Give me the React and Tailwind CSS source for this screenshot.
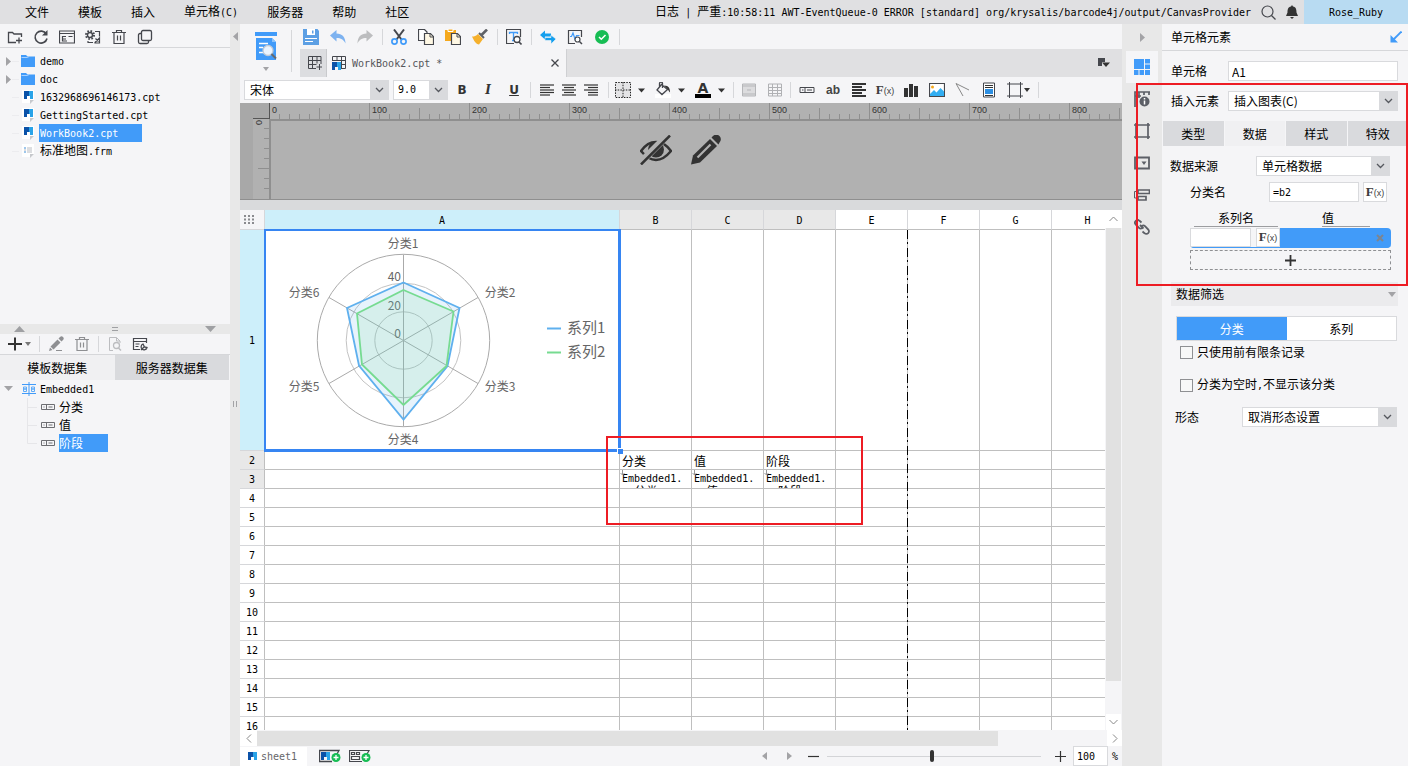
import { useState } from 'react';
import clsx from 'clsx';

const CJK = "font-['Noto_Sans_CJK_SC',sans-serif]";
const MONO = "font-['DejaVu_Sans_Mono','Noto_Sans_CJK_SC',monospace]";

const MENUS = ['文件', '模板', '插入', '单元格(C)', '服务器', '帮助', '社区'];
const LOG = '日志 | 严重:10:58:11 AWT-EventQueue-0 ERROR [standard] org/krysalis/barcode4j/output/CanvasProvider';
const FILES = [
  { name: 'demo', kind: 'folder' },
  { name: 'doc', kind: 'folder' },
  { name: '1632968696146173.cpt', kind: 'cpt' },
  { name: 'GettingStarted.cpt', kind: 'cpt' },
  { name: 'WorkBook2.cpt', kind: 'cpt', selected: true },
  { name: '标准地图.frm', kind: 'frm' },
];
const FIELDS = ['分类', '值', '阶段'];
const COLUMNS = ['A', 'B', 'C', 'D', 'E', 'F', 'G', 'H'];
const ROWS = Array.from({ length: 16 }, (_, i) => i + 1);
const CELLS = {
  B2: '分类', C2: '值', D2: '阶段',
  B3: 'G(分类)', C3: 'G(值)', D3: 'G(阶段)',
};

// latin runs are set in the half-width mono face, the rest stays at 12px
function Txt({ children }) {
  const parts = children.split(/([\x20-\x7e]+)/).filter(Boolean);
  return (
    <span className="whitespace-pre">
      {parts.map((p, i) =>
        /^[\x20-\x7e]/.test(p) ? <span key={i} className={clsx(MONO, 'text-[10px]')}>{p}</span> : p
      )}
    </span>
  );
}

function Icon({ w = 16, h = 16, className, children }) {
  return (
    <svg width={w} height={h} viewBox={`0 0 ${w} ${h}`} fill="none" stroke="#45474d" className={clsx('shrink-0', className)} aria-hidden="true">
      {children}
    </svg>
  );
}

function IconBtn({ label, className = 'w-4', children }) {
  return (
    <button type="button" aria-label={label} className={clsx('flex h-5 shrink-0 items-center justify-center', className)}>
      {children}
    </button>
  );
}

function Sep({ className }) {
  return <div className={clsx('h-4 w-px shrink-0 bg-[#d6d7da]', className)} />;
}

function Caret() {
  return <Icon w={7} h={5}><path d="M0 0.5h7L3.500 4.500z" fill="#333" stroke="none" /></Icon>;
}

function Select({ label, value, id, className, mono }) {
  return (
    <div className={clsx('relative flex h-5 shrink-0 border border-[#d9dadd] bg-white', className)}>
      <select id={id} aria-label={label} className={clsx('h-full w-full appearance-none bg-transparent outline-none', mono ? [MONO, 'pl-1 text-[10px]'] : 'pl-[5px] text-[12px]')}>
        <option>{value}</option>
      </select>
      <span className="pointer-events-none absolute inset-y-0 right-0 flex w-[18px] items-center justify-center bg-[#d9dadd]">
        <Icon w={9} h={6}><path d="M1 1l3.500 3.500L8 1" stroke="#55585e" strokeWidth="1.300" /></Icon>
      </span>
    </div>
  );
}

function Fx() {
  return (
    <span className="flex items-baseline font-['Liberation_Serif',serif] leading-4 font-bold text-[#3c3c3c]">
      <span className="text-[13px]">F</span>
      <span className="font-['Liberation_Sans',sans-serif] text-[9px] font-normal">(x)</span>
    </span>
  );
}

function Logo() {
  return (
    <>
      <path d="M0 0h5v5H3v3H0z" fill="#0b52a8" stroke="none" />
      <path d="M5 0h4v8H6V5H5z" fill="#29a3e8" stroke="none" />
    </>
  );
}

function FileIcon({ kind }) {
  if (kind === 'folder') {
    return <Icon><path d="M1 2h5l1.500 1.500H15V14H1z" fill="#419bf9" stroke="none" /><path d="M1.500 4.500h6L9 3.500" stroke="#a8d1ff" /></Icon>;
  }
  return (
    <Icon>
      <path d="M2 1h12v10l-3 3H2z" fill="#fff" stroke="none" />
      <path d="M10 11h4l-4 4z" fill="#c6c8cc" stroke="none" />
      {kind === 'cpt' ? <g transform="translate(4 2)"><Logo /></g> : (
        <>
          <path d="M4 5h2M4 9h2" stroke="#3f8fd8" />
          <path d="M7 5h5M7 7h5M7 9h5M4 7h2" stroke="#b9bcc2" />
        </>
      )}
    </Icon>
  );
}

function Trash({ color = '#45474d' }) {
  return <Icon><path d="M1 3.500h14M5.500 3V1.500h5V3M3 4v10.500h10V4M6.500 6.500v5M9.500 6.500v5" stroke={color} strokeWidth="1.200" /></Icon>;
}

function LeftPanel() {
  return (
    <aside className="flex w-[230px] shrink-0 flex-col bg-[#f5f5f7]">
      <div className="flex h-6 shrink-0 items-center gap-[10px] border-b border-[#d6d7da] pt-0.5 pl-[7px]">
        <IconBtn label="新建文件夹">
          <Icon><path d="M9 13.500H1.500v-10h4L7 5h7.500v3M12 8.500v6M9 11.500h6" strokeWidth="1.300" /></Icon>
        </IconBtn>
        <IconBtn label="刷新">
          <Icon><path d="M13.300 5A6 6 0 1 0 14 9.500" strokeWidth="1.600" /><path d="M14.500 1v5.500H9z" fill="#45474d" stroke="none" /></Icon>
        </IconBtn>
        <IconBtn label="模板">
          <Icon><path d="M.5 2h15v12H.5zM.5 4.500h15M3.500 7v5.500M3.500 7.500H7M3.500 10H7M3.500 12H8M9.500 7.500h4" strokeWidth="1.200" /></Icon>
        </IconBtn>
        <IconBtn label="设置">
          <Icon><circle cx="5" cy="6" r="4" strokeWidth="2" strokeDasharray="1.600 1.540" /><circle cx="5" cy="6" r="2.500" strokeWidth="1.400" /><path d="M10 2.500h4.500v5M3 12v1.500h5M10 13.500l4.500-4.500v5h-4.500zM10.500 9.500l3 3" strokeWidth="1.200" /></Icon>
        </IconBtn>
        <IconBtn label="删除"><Trash /></IconBtn>
        <IconBtn label="复制">
          <Icon><rect x="4.500" y="1.500" width="10" height="10" rx="1.500" strokeWidth="1.300" /><path d="M4 4.500H3A1.500 1.500 0 0 0 1.500 6v7A1.500 1.500 0 0 0 3 14.500h7a1.500 1.500 0 0 0 1.500-1.500v-1" strokeWidth="1.300" /></Icon>
        </IconBtn>
      </div>

      <ul className="h-[276px] shrink-0 pt-1">
        {FILES.map((f) => (
          <li key={f.name} className="flex h-[18px] items-center pl-1.5">
            <Icon w={14} h={18}>
              {f.kind === 'folder' && <path d="M0 5l5 4.500L0 14z" fill="#a3a3a6" stroke="none" />}
              <path d="M6 9.500h7" stroke="#ececef" />
            </Icon>
            <FileIcon kind={f.kind} />
            <span className={clsx('ml-[3px] flex h-[18px] items-center px-px', f.selected && 'w-[103px] bg-[#419bf9] text-white')}>
              <Txt>{f.name}</Txt>
            </span>
          </li>
        ))}
      </ul>

      <div className="flex h-[10px] shrink-0 items-center justify-between bg-[#e8e8e8] px-[14px]">
        <Icon w={11} h={6}><path d="M5.500 0L11 6H0z" fill="#9fa0a3" stroke="none" /></Icon>
        <Icon w={6} h={4}><path d="M0 .5h6M0 3.500h6" stroke="#9fa0a3" /></Icon>
        <Icon w={11} h={6}><path d="M0 0h11L5.500 6z" fill="#9fa0a3" stroke="none" /></Icon>
      </div>

      <div className="flex h-[21px] shrink-0 items-center border-b border-[#d6d7da] pl-2">
        <IconBtn label="新增" className="w-[22px] gap-[3px]">
          <Icon w={14} h={14}><path d="M7 .5v13M0 7h14" stroke="#333" strokeWidth="2" /></Icon>
          <Icon w={6} h={4}><path d="M0 0h6L3 4z" fill="#777" stroke="none" /></Icon>
        </IconBtn>
        <Sep className="mr-2 ml-[9px]" />
        <IconBtn label="编辑">
          <Icon><path d="M2.500 10.500L9.500 3.500l3 3-7 7zM10.500 2.500L12 1a2 2 0 0 1 3 3l-1.500 1.500zM2 11.500L4.500 14 1 15z" fill="#8e8f92" stroke="none" /><path d="M8 14.500h6" stroke="#8e8f92" /></Icon>
        </IconBtn>
        <span className="w-[10px]" />
        <IconBtn label="删除数据集"><Trash color="#8e8f92" /></IconBtn>
        <Sep className="mx-2" />
        <IconBtn label="预览">
          <Icon><path d="M6 14.500H2.500v-13h7L13 5v2M9.500 1.500V5H13" stroke="#bcbdc0" /><circle cx="9.500" cy="9.500" r="3" stroke="#bcbdc0" strokeWidth="1.300" /><path d="M11.500 12l2.500 2.500" stroke="#bcbdc0" strokeWidth="1.500" /></Icon>
        </IconBtn>
        <span className="w-[9px]" />
        <IconBtn label="连接管理">
          <Icon><path d="M8 13.500H1.500v-11h13V7M1.500 5.500h13M3.500 8h4M3.500 10.500h3" strokeWidth="1.200" /><path d="M9 14l3-3M11 8a3 3 0 1 0 4 3.500l-2.500-.5z" strokeWidth="1.300" /></Icon>
        </IconBtn>
      </div>

      <div className="flex h-[25px] shrink-0 text-[12px]">
        <button type="button" className="flex-1 bg-[#f0f0f2]">模板数据集</button>
        <button type="button" className="mr-px flex-1 bg-[#d9dadd]">服务器数据集</button>
      </div>

      <ul className="flex-1">
        <li className="flex h-[18px] items-center pl-1">
          <Icon w={18} h={6}><path d="M0 0h9L4.500 5z" fill="#a3a3a6" stroke="none" /></Icon>
          <Icon w={14} h={14}>
            <path d="M7 0v14M0 2.500h14M0 11.500h14" stroke="#419bf9" />
            <path d="M1.500 5h3v2h-3zM1.500 7h3v2.500h-3zM9.500 5h3v2h-3zM9.500 7h3v2.500h-3z" stroke="#5fabf8" />
          </Icon>
          <span className="ml-1"><Txt>Embedded1</Txt></span>
        </li>
        {FIELDS.map((f, i) => (
          <li key={f} className="flex h-[18px] items-center pl-[27px]">
            <Icon w={14} h={18}><path d={i === 2 ? 'M.5 0v9.500H10' : 'M.5 0v18M.5 9.500H10'} stroke="#e6e6e9" /></Icon>
            <Icon w={14} h={6}><path d="M.5.5h13v5H.5zM5.500.5v5M7.500 3h4M2.500 3h1" stroke="#6d6e72" /></Icon>
            <span className={clsx('ml-1 flex h-[18px] items-center', i === 2 && 'w-[49px] bg-[#419bf9] text-white')}>{f}</span>
          </li>
        ))}
      </ul>
    </aside>
  );
}

function MainToolbar() {
  return (
    <div className="flex h-[25px] items-center pl-[3px]">
      <div className="flex gap-[11px]">
        <IconBtn label="保存">
          <Icon>
            <path d="M0 0h14.500L16 2v14H0z" fill="#5c9fe4" stroke="none" />
            <path d="M4 0h8v6H4z" fill="#fff" stroke="none" /><path d="M9 1.500h1.500v3H9z" fill="#5c9fe4" stroke="none" />
            <path d="M2 9.500h12M2 12.500h8" stroke="#fff" />
          </Icon>
        </IconBtn>
        <IconBtn label="撤销"><Icon><path d="M6.500 1v3.500C12 4.500 15.500 8 15.500 14.500 13.500 10.500 11 9 6.500 9v3.500L0 6.500z" fill="#7db2f0" stroke="none" /></Icon></IconBtn>
        <IconBtn label="重做"><Icon><path d="M9.500 1v3.500C4 4.500.5 8 .5 14.500 2.500 10.500 5 9 9.500 9v3.500L16 6.500z" fill="#bcbdbf" stroke="none" /></Icon></IconBtn>
      </div>
      <Sep className="mr-2 ml-[9px]" />
      <div className="flex gap-[11px]">
        <IconBtn label="剪切">
          <Icon>
            <path d="M3 .5l7.500 10M13 .5L5.500 10.500" strokeWidth="2" />
            <circle cx="3.500" cy="12.500" r="2.600" stroke="#419bf9" strokeWidth="1.700" /><circle cx="12.500" cy="12.500" r="2.600" stroke="#419bf9" strokeWidth="1.700" />
          </Icon>
        </IconBtn>
        <IconBtn label="复制单元格">
          <Icon><path d="M.5 .5h6L9 3v8.500H.5z" fill="#fff" strokeWidth="1.200" /><path d="M6.500 4.500h6l3 3v8h-9z" fill="#fff8e4" strokeWidth="1.200" /><path d="M12 4.500V8h3.500" /></Icon>
        </IconBtn>
        <IconBtn label="粘贴">
          <Icon><path d="M0 1h11v11H0z" fill="#f5a81c" stroke="none" /><path d="M3 0h5v2.500H3z" fill="#f5a81c" stroke="#fff" /><path d="M6.500 4.500h6l3 3v8h-9z" fill="#fff8e4" strokeWidth="1.200" /><path d="M12 4.500V8h3.500" /></Icon>
        </IconBtn>
        <IconBtn label="格式刷">
          <Icon><path d="M15 .5L9.500 6" strokeWidth="2.600" stroke="#5f6166" /><path d="M7 4l5 5" stroke="#5f6166" strokeWidth="2" /><path d="M6 5l5 5-4 5.500C4 15 2 12 0 7.500 2.500 7.500 4 7 6 5z" fill="#f5b02c" stroke="none" /></Icon>
        </IconBtn>
      </div>
      <Sep className="mr-2 ml-[9px]" />
      <IconBtn label="查找">
        <Icon><path d="M8 14.500H.5V.5h14V8" strokeWidth="1.200" /><path d="M3.500 5V3.500h8V5M7.500 3.500v8M6 11.500h2" stroke="#419bf9" strokeWidth="1.300" /><circle cx="11" cy="10.500" r="3" fill="#fff" strokeWidth="1.300" /><path d="M13 13l2.500 2.500" strokeWidth="1.600" /></Icon>
      </IconBtn>
      <Sep className="mr-2 ml-[9px]" />
      <div className="flex gap-[11px]">
        <IconBtn label="切换">
          <Icon><path d="M5 1.500v3h6v3H5v3L0 6z" fill="#149fee" stroke="none" /><path d="M11 6v2.500H5v3h6V15l5-5z" fill="#149fee" stroke="#f5f5f7" strokeWidth=".6" /></Icon>
        </IconBtn>
        <IconBtn label="监控">
          <Icon><path d="M8 14.500H1.500v-13h13V8" strokeWidth="1.200" /><path d="M3 7.500h1.500L6 4l2 6 1.500-3.500h3" stroke="#419bf9" strokeWidth="1.200" /><circle cx="10.500" cy="10.500" r="2.500" fill="#fff" strokeWidth="1.200" /><path d="M12.500 12.500L15 15" strokeWidth="1.500" /></Icon>
        </IconBtn>
        <IconBtn label="检查">
          <Icon><circle cx="8" cy="8" r="7" fill="#17bd54" stroke="none" /><path d="M5 8l2.300 2.300L11.500 6" stroke="#fff" strokeWidth="1.500" /></Icon>
        </IconBtn>
      </div>
      <Sep className="ml-[9px]" />
    </div>
  );
}

function FileTabs() {
  return (
    <div className="flex h-7 items-stretch bg-[#e0e0e2]">
      <button type="button" aria-label="新建" className="flex w-[27px] items-center justify-center border-r border-[#c9cacd] bg-[#dcdde0] pl-1">
        <Icon w={14} h={14}><path d="M8 12.500H.5V.5h12.500V8M.5 4.500H13M.5 8.500h8M4.500.5v12M9 .5v7M11.500 8v6M8.500 11h6" /></Icon>
      </button>
      <div className="flex w-[240px] items-center border-r border-[#cfd0d3] bg-[#f5f5f7] pl-[5px]">
        <Icon w={14} h={14}>
          <path d="M.5 5V.5h13v12H9M.5 4.500h13M9 8.500h4.500M5 .5v4M9.500.5V13" />
          <g transform="translate(0 6)"><Logo /></g>
        </Icon>
        <span className="ml-1.5 flex-1 text-[#55565a]"><Txt>WorkBook2.cpt *</Txt></span>
        <button type="button" aria-label="关闭" className="mr-[7px]">
          <Icon w={8} h={8}><path d="M.5.5l7 7M7.500.5l-7 7" strokeWidth="1.300" /></Icon>
        </button>
      </div>
      <button type="button" aria-label="标签列表" className="mr-3 ml-auto">
        <Icon w={12} h={10}><path d="M0 0h7v4H4v4H0z" fill="#45474d" stroke="none" /><path d="M4 4.500h8L8 9z" fill="#333" stroke="none" /></Icon>
      </button>
    </div>
  );
}

function AlignIcon({ lines }) {
  return <Icon w={14} h={13}>{lines.map(([a, b], i) => <path key={i} d={`M${a} ${i * 2.5 + 1}H${b}`} stroke="#333" strokeWidth="1.200" />)}</Icon>;
}

function FormatBar() {
  return (
    <div className="flex h-[26px] shrink-0 items-center pl-1">
      <Select label="字体" value="宋体" className="w-[145px]" />
      <Select label="字号" value="9.0" mono className="ml-1 w-[55px]" />
      <div className="ml-[6px] flex gap-[10px] text-[12px] text-[#333]">
        <IconBtn label="加粗"><b className="font-['DejaVu_Sans',sans-serif]">B</b></IconBtn>
        <IconBtn label="斜体"><i className="font-['DejaVu_Serif',serif] font-bold">I</i></IconBtn>
        <IconBtn label="下划线"><u className="font-['DejaVu_Sans',sans-serif] font-bold">U</u></IconBtn>
      </div>
      <Sep className="mr-[9px] ml-2" />
      <div className="flex gap-2">
        <IconBtn label="左对齐" className="w-[14px]"><AlignIcon lines={[[0, 14], [0, 10], [0, 14], [0, 14], [0, 10]]} /></IconBtn>
        <IconBtn label="居中" className="w-[14px]"><AlignIcon lines={[[0, 14], [2, 12], [0, 14], [2, 12], [0, 14]]} /></IconBtn>
        <IconBtn label="右对齐" className="w-[14px]"><AlignIcon lines={[[0, 14], [4, 14], [0, 14], [4, 14], [4, 14]]} /></IconBtn>
      </div>
      <Sep className="mr-[6px] ml-[10px]" />
      <div className="flex gap-[10px]">
        <IconBtn label="边框" className="w-[30px] gap-[7px]">
          <Icon><path d="M.5.5h15v15H.5zM8 0v16M0 8h16" stroke="#222" strokeDasharray="1.500 1.200" fill="#e4e4e6" /></Icon><Caret />
        </IconBtn>
        <IconBtn label="背景色" className="w-[30px] gap-[7px]">
          <Icon><path d="M0 12h16v4H0z" fill="#fff" stroke="none" /><path d="M6.500 2.500l6 5L7 12.500 2 8zM4.500 5V1.500a1.500 1.500 0 0 1 3 0V6" strokeWidth="1.300" /><path d="M9 3.500c5 0 6 3 6 7-1.500-1-1.500-3-3-4z" fill="#333" stroke="none" /></Icon><Caret />
        </IconBtn>
        <IconBtn label="文字颜色" className="w-[30px] gap-[7px]">
          <span className="flex w-4 flex-col items-center"><b className="font-['DejaVu_Sans',sans-serif] text-[14px] leading-3 text-[#333]">A</b><span className="h-1 w-4 bg-black" /></span>
          <Caret />
        </IconBtn>
      </div>
      <Sep className="mr-[7px] ml-2" />
      <div className="flex gap-[10px]">
        <IconBtn label="合并">
          <Icon><path d="M1.500 2h13v12h-13z" fill="#dcdcde" stroke="#b5b6b9" /><path d="M1.500 4h13M1.500 12h13M6 8h4" stroke="#b5b6b9" /></Icon>
        </IconBtn>
        <IconBtn label="拆分">
          <Icon><path d="M1.500 2h13v12h-13zM1.500 5.500h13M1.500 8.500h13M1.500 11.500h13M5.500 2v12M10.500 2v12" stroke="#b0b1b4" /></Icon>
        </IconBtn>
      </div>
      <Sep className="mr-2 ml-[7px]" />
      <div className="flex gap-[10px]">
        <IconBtn label="数据列"><Icon><path d="M1 5.500h14v5H1zM6 5.500v5M8 8h5M3 8h1.500" /></Icon></IconBtn>
        <IconBtn label="文本"><span className="font-['Liberation_Sans',sans-serif] text-[12px] font-bold text-[#444]">ab</span></IconBtn>
        <IconBtn label="富文本"><Icon><path d="M1 2h14M1 5h10M1 8h14M1 11h10M1 14h14" stroke="#333" strokeWidth="1.800" /></Icon></IconBtn>
        <IconBtn label="公式"><Fx /></IconBtn>
        <IconBtn label="图表"><Icon><path d="M1 6h4v9H1zM6 2h4v13H6zM11 4h4v11h-4z" fill="#333" stroke="none" /></Icon></IconBtn>
        <IconBtn label="图片">
          <Icon><path d="M.5 1.500h15v13H.5z" fill="#fff" strokeWidth="1.200" /><circle cx="3.500" cy="5" r="1.500" fill="#f5a81c" stroke="none" /><path d="M1 14v-2l4-4 2.500 2.500L11.500 6 15 9.500V14z" fill="#32aef2" stroke="none" /></Icon>
        </IconBtn>
        <IconBtn label="斜线"><Icon><path d="M1 1.500l13 6.500M1 1.500l7 12.500" stroke="#888" /></Icon></IconBtn>
        <IconBtn label="子报表"><Icon><path d="M2.500 1h11v14h-11z" fill="#fff" /><path d="M4 3.500h8M4 5.500h8M4 13.500h8" stroke="#333" /><path d="M4 7h8v5H4z" fill="#2d8fe2" stroke="none" /></Icon></IconBtn>
        <IconBtn label="悬浮元素" className="w-[23px] gap-px">
          <Icon><path d="M2.500 0v16M13.500 0v16M0 2h16M0 14h16" /></Icon>
          <Icon w={6} h={4}><path d="M0 0h6L3 4z" fill="#333" stroke="none" /></Icon>
        </IconBtn>
      </div>
      <Sep className="ml-2" />
    </div>
  );
}

function ReportHeader() {
  const ticks = Array.from({ length: 86 }, (_, i) => i);
  return (
    <div className="relative h-[97px] shrink-0 overflow-hidden border-b border-[#8f8f8f] bg-[#b1b1b1]">
      <svg className="block h-full w-full" fill="none" stroke="#8f8f8f">
        <path d="M0 0h13v97H0zM0 0h30v16H0z" fill="#a8a8a8" stroke="none" />
        {ticks.map((i) => (
          <path key={i} d={`M${i * 10 + 29.5} ${i % 10 === 0 ? 0 : i % 5 === 0 ? 5 : 11}V16`} />
        ))}
        {[1, 2, 3, 4, 5, 6, 7].map((i) => (
          <path key={i} d={`M${i === 5 ? 18 : 24} ${i * 10 + 15.5}H29`} />
        ))}
        <path d="M30 17H900M30 16v81" strokeWidth="2" />
        <path d="M13 15.500h17M29.500 0v16" stroke="#555" />
        {[0, 1, 2, 3, 4, 5, 6, 7, 8].map((i) => (
          <text key={i} x={i * 100 + 32} y="10" fontSize="9" fontFamily="Liberation Sans, sans-serif" fill="#333" stroke="none">{i * 100}</text>
        ))}
        <text transform="translate(22 22) rotate(-90)" fontSize="9" fontFamily="Liberation Sans, sans-serif" fill="#333" stroke="none">0</text>
      </svg>
      <div className="absolute inset-x-0 top-8 flex justify-center gap-[18px]">
        <button type="button" aria-label="隐藏">
          <Icon w={32} h={30}>
            <path d="M1 16C6 9 11 7 16 7s10 2 15 9c-5 6-10 9-15 9S6 22 1 16z" strokeWidth="2.500" stroke="#333" />
            <circle cx="16" cy="14.500" r="8" fill="#333" stroke="none" />
            <path d="M0 28L29 -1" stroke="#b1b1b1" strokeWidth="7" />
            <path d="M1 29.500L30 .5" stroke="#333" strokeWidth="2.500" />
          </Icon>
        </button>
        <button type="button" aria-label="编辑页眉">
          <Icon w={32} h={30}>
            <path d="M1 29.500l2-9L20 4l7 7L10 27.500z" fill="#333" stroke="none" />
            <path d="M21.500 2.500l1.500-1.500a4 4 0 0 1 6.500 6.500L28.500 9.500z" fill="#333" stroke="none" />
            <path d="M7.500 22.500L20.500 9.500" stroke="#b1b1b1" strokeWidth="2.200" />
          </Icon>
        </button>
      </div>
    </div>
  );
}

function RadarChart() {
  const font = 'Noto Sans CJK SC, sans-serif';
  const spokes = [[0, -86], [74.5, -43], [74.5, 43], [0, 86], [-74.5, 43], [-74.5, -43]];
  const labels = [[138, 18, '分类1'], [235, 67, '分类2'], [235, 161, '分类3'], [138, 214, '分类4'], [39, 161, '分类5'], [39, 67, '分类6']];
  return (
    <svg width="354" height="220" viewBox="0 0 354 220" fill="none" className="block">
      {[28.7, 57.3, 86.2].map((r) => <circle key={r} cx="138.500" cy="110.500" r={r} stroke={r > 80 ? '#aaa' : '#c3c3c3'} />)}
      {spokes.map(([x, y], i) => <path key={i} d={`M138.500 110.500l${x} ${y}`} stroke="#aaa" />)}
      <g fontFamily={font} fontSize="12" fill="#666">
        <text x="136" y="51" textAnchor="end">40</text>
        <text x="136" y="80" textAnchor="end">20</text>
        <text x="136" y="108" textAnchor="end">0</text>
      </g>
      <path d="M138.500 52.500L194.500 78 182.500 136 138.500 189.500 94 135.500 82 78z" fill="#5fb0ee" fillOpacity=".15" stroke="#5fb0ee" strokeWidth="1.800" />
      <path d="M138.500 60L188.500 81.500 181.500 136 138.500 175 97 134.500 92 83.500z" fill="#76db91" fillOpacity=".15" stroke="#76db91" strokeWidth="1.800" />
      <g fontFamily={font} fontSize="12" fill="#666">
        {labels.map(([x, y, t]) => <text key={t} x={x} y={y} textAnchor="middle">{t}</text>)}
      </g>
      <path d="M282 98.500h14" stroke="#5fb0ee" strokeWidth="2" />
      <path d="M282 122.500h14" stroke="#76db91" strokeWidth="2" />
      <g fontFamily={font} fontSize="15" fill="#666">
        <text x="302" y="103">系列1</text>
        <text x="302" y="127">系列2</text>
      </g>
    </svg>
  );
}

function Cell({ id }) {
  if (id === 'A1') {
    return (
      <div className="relative">
        <RadarChart />
        <div className="absolute -inset-px -right-0.5 -bottom-0.5 border-2 border-r-[3px] border-b-[3px] border-[#3685f2]" />
        <div className="absolute -right-1 -bottom-1 h-1.5 w-1.5 border-t border-l border-white bg-[#3685f2]" />
      </div>
    );
  }
  const value = CELLS[id];
  if (!value) return null;
  if (id.endsWith('3')) {
    return (
      <div className="relative h-[18px] overflow-hidden pl-0.5 leading-[14px]">
        <Icon w={5} h={6} className="absolute top-0 left-0"><path d="M2.500 0v5M.5 3l2 2 2-2" stroke="#999" /></Icon>
        <div className="h-[14px]"><Txt>Embedded1.</Txt></div>
        <div><Txt>{value}</Txt></div>
      </div>
    );
  }
  return <div className="h-[18px] pl-0.5 leading-[20px]">{value}</div>;
}

function Sheet() {
  return (
    <div className="flex min-h-0 flex-1">
      <div className="relative min-w-0 flex-1 overflow-hidden bg-white">
        <table className="w-[884px] table-fixed border-separate border-spacing-0 text-left leading-[14px]">
          <colgroup>
            <col className="w-[25px]" />
            <col className="w-[355px]" />
            {COLUMNS.slice(1).map((c) => <col key={c} className="w-[72px]" />)}
          </colgroup>
          <thead>
            <tr className="h-5">
              <th aria-label="全选" className="border-r border-b border-[#d6d7da] bg-[#f5f5f7] p-0">
                <Icon w={12} h={9} className="ml-1"><path d="M0 1h12M0 4.500h12M0 8h12" stroke="#8a8b8f" strokeWidth="2" strokeDasharray="2" /></Icon>
              </th>
              {COLUMNS.map((c, i) => (
                <th key={c} className={clsx('border-r border-b border-r-[#d6d7da] border-b-[#bfbfbf] p-0 text-center font-normal', i === 0 ? 'bg-[#cdeffa]' : i < 4 ? 'bg-[#e8e8e8]' : 'bg-white')}>
                  <Txt>{c}</Txt>
                </th>
              ))}
            </tr>
          </thead>
          <tbody>
            {ROWS.map((r) => (
              <tr key={r} className={r === 1 ? 'h-[221px]' : 'h-[19px]'}>
                <th className={clsx('border-r border-b border-r-[#bfbfbf] border-b-[#d6d7da] p-0 text-center font-normal', r === 1 ? 'bg-[#cdeffa]' : r < 4 ? 'bg-[#e8e8e8]' : 'bg-white')}>
                  <Txt>{String(r)}</Txt>
                </th>
                {COLUMNS.map((c) => (
                  <td key={c} className="border-r border-b border-[#bfbfbf] p-0">
                    <Cell id={c + r} />
                  </td>
                ))}
              </tr>
            ))}
          </tbody>
        </table>
        {/* page break */}
        <div className="absolute top-5 bottom-0 left-[667px] w-px bg-[repeating-linear-gradient(to_bottom,#000_0_9px,#bfbfbf_9px_12px,#000_12px_14px,#bfbfbf_14px_18px)]" />
        <div className="absolute top-[226px] left-[366px] h-[89px] w-[257px] border-2 border-[#ed1c24]" />
      </div>
      <div className="flex w-[17px] shrink-0 flex-col items-center bg-[#f5f5f7]">
        <button type="button" aria-label="向上" className="flex h-[18px] w-full items-center justify-center bg-white">
          <Icon w={9} h={6}><path d="M.5 5L4.500 1l4 4" stroke="#888" /></Icon>
        </button>
        <div className="h-[453px] w-[15px] bg-[#e1e1e1]" />
        <button type="button" aria-label="向下" className="mt-auto flex h-4 w-[15px] items-center justify-center bg-white">
          <Icon w={9} h={6}><path d="M.5 1l4 4 4-4" stroke="#888" /></Icon>
        </button>
      </div>
    </div>
  );
}

function SheetFooter() {
  const [zoom, setZoom] = useState(100);
  return (
    <>
      <div className="flex h-4 shrink-0 items-center bg-[#f5f5f7]">
        <button type="button" aria-label="向左" className="flex h-4 w-[17px] items-center justify-center bg-white">
          <Icon w={6} h={9}><path d="M5 .5l-4 4 4 4" stroke="#888" /></Icon>
        </button>
        <div className="h-[15px] w-[741px] bg-[#e1e1e1]" />
        <button type="button" aria-label="向右" className="ml-auto flex h-4 w-[15px] items-center justify-center bg-white">
          <Icon w={6} h={9}><path d="M1 .5l4 4-4 4" stroke="#888" /></Icon>
        </button>
      </div>
      <div className="flex h-5 shrink-0 items-center bg-[#f5f5f7]">
        <button type="button" className="flex h-[19px] w-[67px] items-center gap-1 bg-white pl-2 text-[#66676b]">
          <Icon w={9} h={8}><Logo /></Icon>
          <Txt>sheet1</Txt>
        </button>
        <IconBtn label="新增sheet" className="ml-3 w-[22px]">
          <Icon w={22} h={14}><path d="M13 12.500H.5V1.500H20L18 5" strokeWidth="1.300" /><g transform="translate(2 3)"><Logo /></g><circle cx="17" cy="8.500" r="4.500" fill="#17bd54" stroke="none" /><path d="M14.500 8.500h5M17 6v5" stroke="#fff" strokeWidth="1.300" /></Icon>
        </IconBtn>
        <IconBtn label="新增聚合块" className="ml-2 w-[22px]">
          <Icon w={22} h={14}><path d="M13 12.500H.5V1.500H20L18 5M2.500 3.500h3v2h-3zM7.500 3.500h3v2h-3zM2.500 7.500h8v3h-8z" strokeWidth="1.200" /><circle cx="17" cy="8.500" r="4.500" fill="#17bd54" stroke="none" /><path d="M14.500 8.500h5M17 6v5" stroke="#fff" strokeWidth="1.300" /></Icon>
        </IconBtn>
        <div className="ml-auto flex items-center">
          <button type="button" aria-label="上一页"><Icon w={5} h={8}><path d="M5 0v8L0 4z" fill="#a3a3a6" stroke="none" /></Icon></button>
          <button type="button" aria-label="下一页" className="ml-5"><Icon w={5} h={8}><path d="M0 0v8l5-4z" fill="#a3a3a6" stroke="none" /></Icon></button>
          <button type="button" aria-label="缩小" className="ml-4"><Icon w={11} h={11}><path d="M0 5.500h11" stroke="#333" strokeWidth="1.200" /></Icon></button>
          <input
            type="range"
            aria-label="缩放"
            min="10"
            max="194"
            value={zoom}
            onChange={(e) => setZoom(Number(e.target.value))}
            className="mx-2 h-3 w-[214px] appearance-none bg-[linear-gradient(#d3d4d7,#d3d4d7)] bg-[length:100%_1px] bg-center bg-no-repeat [&::-webkit-slider-thumb]:h-3 [&::-webkit-slider-thumb]:w-1 [&::-webkit-slider-thumb]:appearance-none [&::-webkit-slider-thumb]:rounded-sm [&::-webkit-slider-thumb]:bg-[#333]"
          />
          <button type="button" aria-label="放大" className="ml-1.5"><Icon w={11} h={11}><path d="M0 5.500h11M5.500 0v11" stroke="#333" strokeWidth="1.200" /></Icon></button>
          <input aria-label="缩放比例" value={zoom} readOnly className={clsx(MONO, 'ml-[7px] h-5 w-[35px] border border-[#d9dadd] bg-white pl-[3px] text-[10px]')} />
          <span className="mr-1 ml-1"><Txt>%</Txt></span>
        </div>
      </div>
    </>
  );
}

function SideBar() {
  const dark = '#5c5f66';
  return (
    <nav className="flex w-10 shrink-0 flex-col items-center bg-[#e8e8e8]">
      <button type="button" aria-label="收起" className="flex h-[27px] items-center">
        <Icon w={5} h={9}><path d="M0 0v9l5-4.500z" fill="#a3a3a6" stroke="none" /></Icon>
      </button>
      <button type="button" aria-label="单元格元素" className="flex h-8 w-8 items-center justify-center bg-[#f5f5f7]">
        <Icon><path d="M0 0h10v10H0zM11 0h5v4.500h-5zM11 5.500h5V10h-5zM0 11h4.500v5H0zM5.500 11H10v5H5.500zM11 11h5v5h-5z" fill="#419bf9" stroke="none" /></Icon>
      </button>
      <button type="button" aria-label="单元格属性" className="flex h-8 items-center">
        <Icon><path d="M1 16V1h15M1 5h6M5 1v6M10 1v3M15 1v3" stroke={dark} strokeWidth="1.700" /><circle cx="10.500" cy="10.500" r="5" fill={dark} stroke="none" /><path d="M10.500 9.500v4M10.500 7v1.500" stroke="#fff" strokeWidth="1.500" /></Icon>
      </button>
      <button type="button" aria-label="悬浮元素" className="flex h-8 items-center">
        <Icon><path d="M2 0v16M14 0v16M0 2h16M0 14h16" stroke={dark} strokeWidth="1.700" /></Icon>
      </button>
      <button type="button" aria-label="控件设置" className="flex h-8 items-center">
        <Icon><path d="M1 2.500h14v11H1z" stroke={dark} strokeWidth="1.800" /><path d="M7.500 6.500h5L10 10z" fill={dark} stroke="none" /></Icon>
      </button>
      <button type="button" aria-label="条件属性" className="flex h-8 items-center">
        <Icon><path d="M4 3h11.500v3.500H4zM4 9.500h8v3.500H4z" stroke={dark} strokeWidth="1.700" /><path d="M4 4.500H.5v6.500H4" stroke={dark} /></Icon>
      </button>
      <button type="button" aria-label="超级链接" className="flex h-8 items-center">
        <Icon><path d="M9.500 9.500L6 6M7.500 3.500L5.500 1.800a2.600 2.600 0 0 0-3.700 3.700L5 8.800a2.600 2.600 0 0 0 3 .5M8.500 12.500l2 1.700a2.600 2.600 0 0 0 3.700-3.700L11 7.200a2.600 2.600 0 0 0-3-.5" stroke={dark} strokeWidth="1.800" /></Icon>
      </button>
    </nav>
  );
}

function Properties() {
  const [tab, setTab] = useState('数据');
  return (
    <section className="min-w-0 flex-1 bg-[#f5f5f7]">
      <header className="flex h-[27px] items-center justify-between border-b border-[#d6d7da] pr-1.5 pl-[9px]">
        <h2>单元格元素</h2>
        <button type="button" aria-label="停靠">
          <Icon w={12} h={12}><path d="M11.500.5L3 9" stroke="#419bf9" strokeWidth="1.800" /><path d="M.5 4v7.500H8z" fill="#419bf9" stroke="none" /></Icon>
        </button>
      </header>
      <div className="mt-[10px] flex items-center pr-[10px] pl-[9px]">
        <label htmlFor="cell" className="w-[57px]">单元格</label>
        <input id="cell" defaultValue="A1" className="h-5 min-w-0 flex-1 border border-[#d9dadd] bg-white pl-[3px] font-['Noto_Sans_CJK_SC',sans-serif] text-[12px]" />
      </div>
      <div className="mt-[10px] flex items-center pr-[10px] pl-[9px]">
        <label htmlFor="insert" className="w-[57px]">插入元素</label>
        <Select id="insert" value="插入图表(C)" className="min-w-0 flex-1" />
      </div>
      <div className="mt-[10px] grid h-[25px] grid-cols-4 gap-px pl-px">
        {['类型', '数据', '样式', '特效'].map((t) => (
          <button key={t} type="button" onClick={() => setTab(t)} className={t === tab ? 'bg-[#f0f0f2]' : 'bg-[#d9dadd]'}>{t}</button>
        ))}
      </div>
      <div className="mt-[10px] flex items-center pl-2">
        <label htmlFor="source" className="w-[86px]">数据来源</label>
        <Select id="source" value="单元格数据" className="w-[134px]" />
      </div>
      <div className="mt-1.5 flex items-center pl-7">
        <label htmlFor="category" className="w-[79px]">分类名</label>
        <input id="category" defaultValue="=b2" className={clsx(MONO, 'h-5 w-[90px] border border-[#d9dadd] bg-white pl-[3px] text-[10px]')} />
        <button type="button" aria-label="公式" className="ml-1 flex h-5 w-6 items-center justify-center border border-[#d9dadd] bg-white"><Fx /></button>
      </div>
      <div className="mt-[7px] mr-[17px] ml-7">
        <div className="flex h-[19px] items-start leading-[17px]">
          <div className="ml-1 w-[84px] border-b border-[#9c9da0] text-center">系列名</div>
          <div className="ml-11 w-[48px] border-b border-[#9c9da0] pr-9 text-center whitespace-nowrap">值</div>
        </div>
        <div className="flex h-5 items-stretch rounded-sm border-b border-[#419bf9] bg-[#419bf9]">
          <input aria-label="系列名" className="w-[61px] border border-[#d9dadd] bg-white" />
          <span className="w-[5px] bg-[#f5f5f7]" />
          <button type="button" aria-label="系列公式" className="flex w-6 items-center justify-center border border-[#d9dadd] bg-white"><Fx /></button>
          <button type="button" aria-label="移除" className="mr-[7px] ml-auto">
            <Icon w={8} h={8}><path d="M1 1l6 6M7 1L1 7" stroke="#7d8590" strokeWidth="2" /></Icon>
          </button>
        </div>
        <button type="button" aria-label="添加系列" className="mt-0.5 flex h-5 w-full items-center justify-center border border-dashed border-[#8f9093]">
          <Icon w={11} h={11}><path d="M0 5.500h11M5.500 0v11" stroke="#333" strokeWidth="1.800" /></Icon>
        </button>
      </div>
      <div className="mt-3 mr-[10px] ml-[9px] flex h-6 items-center justify-between bg-[#ebebed] pr-0.5 pl-[5px]">
        <h3>数据筛选</h3>
        <Icon w={8} h={5}><path d="M0 0h8L4 5z" fill="#a3a3a6" stroke="none" /></Icon>
      </div>
      <div className="mt-[10px] mr-[11px] ml-[14px] grid h-[25px] grid-cols-2 border border-[#d9dadd] bg-white">
        <button type="button" className="bg-[#419bf9] text-white">分类</button>
        <button type="button">系列</button>
      </div>
      <label className="mt-0.5 ml-[18px] flex h-[18px] items-center gap-1">
        <input type="checkbox" className="h-[13px] w-[13px] appearance-none border border-[#8f9093] bg-[#f8f8f8]" />
        只使用前有限条记录
      </label>
      <label className="mt-[15px] ml-[18px] flex h-[18px] items-center gap-1">
        <input type="checkbox" className="h-[13px] w-[13px] appearance-none border border-[#8f9093] bg-[#f8f8f8]" />
        <Txt>分类为空时,不显示该分类</Txt>
      </label>
      <div className="mt-[13px] flex items-center pr-[11px] pl-[13px]">
        <label htmlFor="style" className="w-[67px]">形态</label>
        <Select id="style" value="取消形态设置" className="min-w-0 flex-1" />
      </div>
    </section>
  );
}

export default function App() {
  return (
    <div className={clsx(CJK, 'flex h-screen min-h-[600px] flex-col overflow-hidden bg-[#f5f5f7] text-[12px] leading-[18px] text-black')}>
      <header className="flex h-6 shrink-0 items-center bg-[#e0e0e2]">
        <nav className="flex gap-[29px] pl-[25px]">
          {MENUS.map((m) => <button key={m} type="button"><Txt>{m}</Txt></button>)}
        </nav>
        <div className="ml-auto flex h-full items-center">
          <Txt>{LOG}</Txt>
          <button type="button" aria-label="搜索" className="ml-[10px]">
            <Icon w={15} h={15}><circle cx="6.500" cy="6.500" r="5.500" strokeWidth="1.200" /><path d="M10.500 10.500l4 4" strokeWidth="1.300" /></Icon>
          </button>
          <button type="button" aria-label="通知" className="mr-1.5 ml-[10px]">
            <Icon w={12} h={14}><path d="M6 0l1 1.500c3 .5 3.500 3 3.500 6L12 11H0l1.500-3.500c0-3 .5-5.500 3.500-6zM4 12h4l-2 2z" fill="#333" stroke="none" /></Icon>
          </button>
          <button type="button" className="h-full w-[104px] bg-[#b8dbf2]"><Txt>Rose_Ruby</Txt></button>
        </div>
      </header>

      <div className="flex min-h-0 flex-1">
        <LeftPanel />
        <div className="flex w-[10px] shrink-0 flex-col items-center bg-[#e8e8e8] pt-2">
          <Icon w={5} h={9}><path d="M5 0v9L0 4.500z" fill="#a3a3a6" stroke="none" /></Icon>
          <Icon w={4} h={6} className="my-auto"><path d="M.5 0v6M3.500 0v6" stroke="#a3a3a6" /></Icon>
        </div>

        <main className="flex min-w-0 flex-1 flex-col">
          <div className="flex h-[53px] shrink-0">
            <div className="flex w-[60px] items-center">
              <button type="button" aria-label="预览模板" className="ml-[15px] flex w-[22px] flex-col items-center gap-[6px]">
                <Icon w={22} h={30}>
                  <path d="M0 1h22v4H0zM1 7h16l4 4v18H1z" fill="#419bf9" stroke="none" />
                  <path d="M4 12.500h9M4 16.500h4M4 21.500h5" stroke="#fff" strokeWidth="1.500" />
                  <path d="M17 7l4 4h-4z" fill="#8cc3fb" stroke="none" />
                  <circle cx="13" cy="19.500" r="5" fill="#eaf4ff" stroke="#c0cad6" strokeWidth="1.300" />
                  <path d="M16.500 23l4.500 4.500" stroke="#66696e" strokeWidth="2" />
                </Icon>
                <Icon w={6} h={4}><path d="M0 0h6L3 4z" fill="#a3a3a6" stroke="none" /></Icon>
              </button>
              <div className="ml-[14px] h-[42px] w-px bg-[#d6d7da]" />
            </div>
            <div className="min-w-0 flex-1">
              <MainToolbar />
              <FileTabs />
            </div>
          </div>
          <FormatBar />
          <ReportHeader />
          <div className="h-[10px] shrink-0 bg-[#d9dadc]" />
          <Sheet />
          <SheetFooter />
        </main>

        <div className="relative flex w-[286px] shrink-0">
          <SideBar />
          <Properties />
          <div className="pointer-events-none absolute top-[59px] right-0 h-[203px] w-[272px] border-2 border-[#ed1c24]" />
        </div>
      </div>
    </div>
  );
}
